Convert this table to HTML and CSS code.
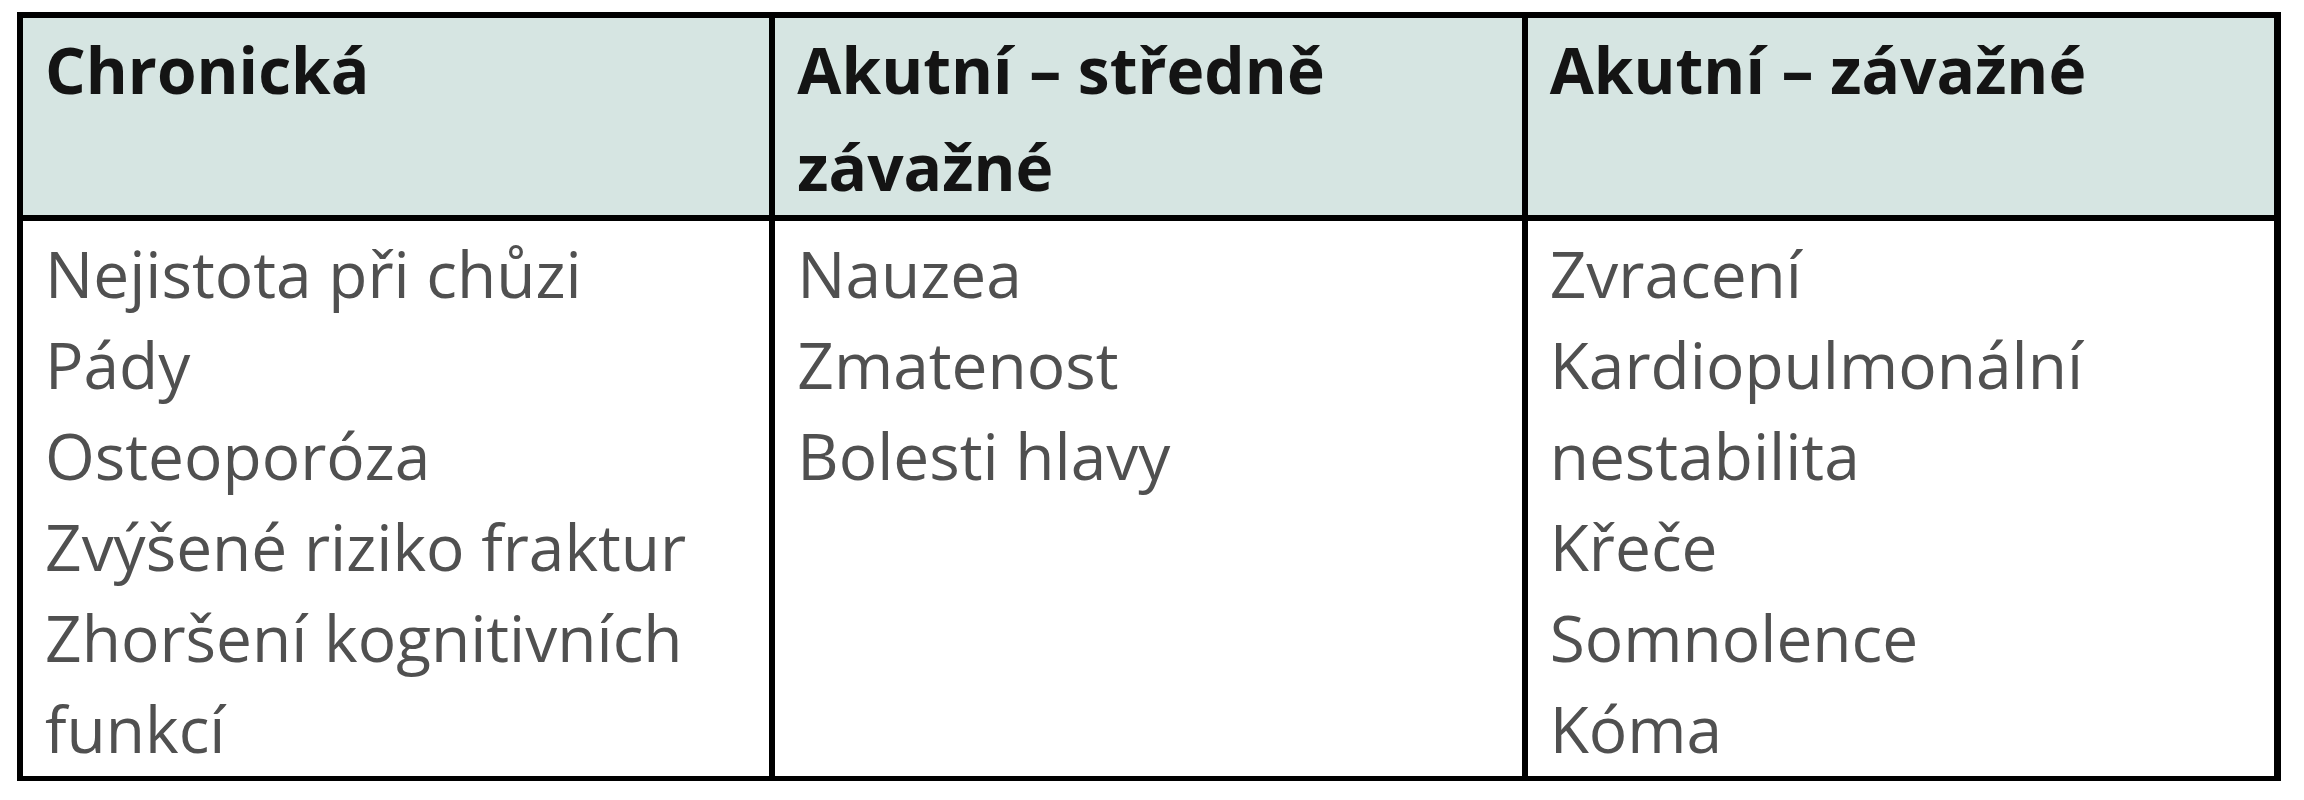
FILE: index.html
```html
<!DOCTYPE html>
<html lang="cs">
<head>
<meta charset="utf-8">
<title>Příznaky</title>
<link rel="stylesheet" href="styles.css">
</head>
<body>
<div class="tbl">
  <div class="cell head">Chronická</div>
  <div class="cell head">Akutní – středně závažné</div>
  <div class="cell head">Akutní – závažné</div>
  <div class="cell body">
    <div class="item">Nejistota při chůzi</div>
    <div class="item">Pády</div>
    <div class="item">Osteoporóza</div>
    <div class="item">Zvýšené riziko fraktur</div>
    <div class="item">Zhoršení kognitivních funkcí</div>
  </div>
  <div class="cell body">
    <div class="item">Nauzea</div>
    <div class="item">Zmatenost</div>
    <div class="item">Bolesti hlavy</div>
  </div>
  <div class="cell body">
    <div class="item">Zvracení</div>
    <div class="item">Kardiopulmonální nestabilita</div>
    <div class="item">Křeče</div>
    <div class="item">Somnolence</div>
    <div class="item">Kóma</div>
  </div>
</div>
</body>
</html>
```

FILE: styles.css
```css
html, body {
  margin: 0;
  padding: 0;
  background: #ffffff;
}
body {
  padding: 12px 0 0 17px;
  font-family: "Open Sans", "Noto Sans", sans-serif;
}
.tbl {
  width: 2264px;
  box-sizing: border-box;
  display: grid;
  grid-template-columns: repeat(3, 1fr);
  grid-template-rows: 197px 555px;
  gap: 6px;
  padding: 6px 7px 5px 6px;
  background: #000000;
}
.cell {
  box-sizing: border-box;
  padding-left: 22px;
  padding-right: 16px;
}
.head {
  background: #d6e5e2;
  color: #141414;
  font-weight: 700;
  font-size: 64px;
  line-height: 97px;
  padding-top: 3px;
}
.body {
  background: #ffffff;
  color: #505050;
  font-size: 64px;
  line-height: 91px;
  padding-top: 7px;
}
.item {
  margin: 0;
}
```
